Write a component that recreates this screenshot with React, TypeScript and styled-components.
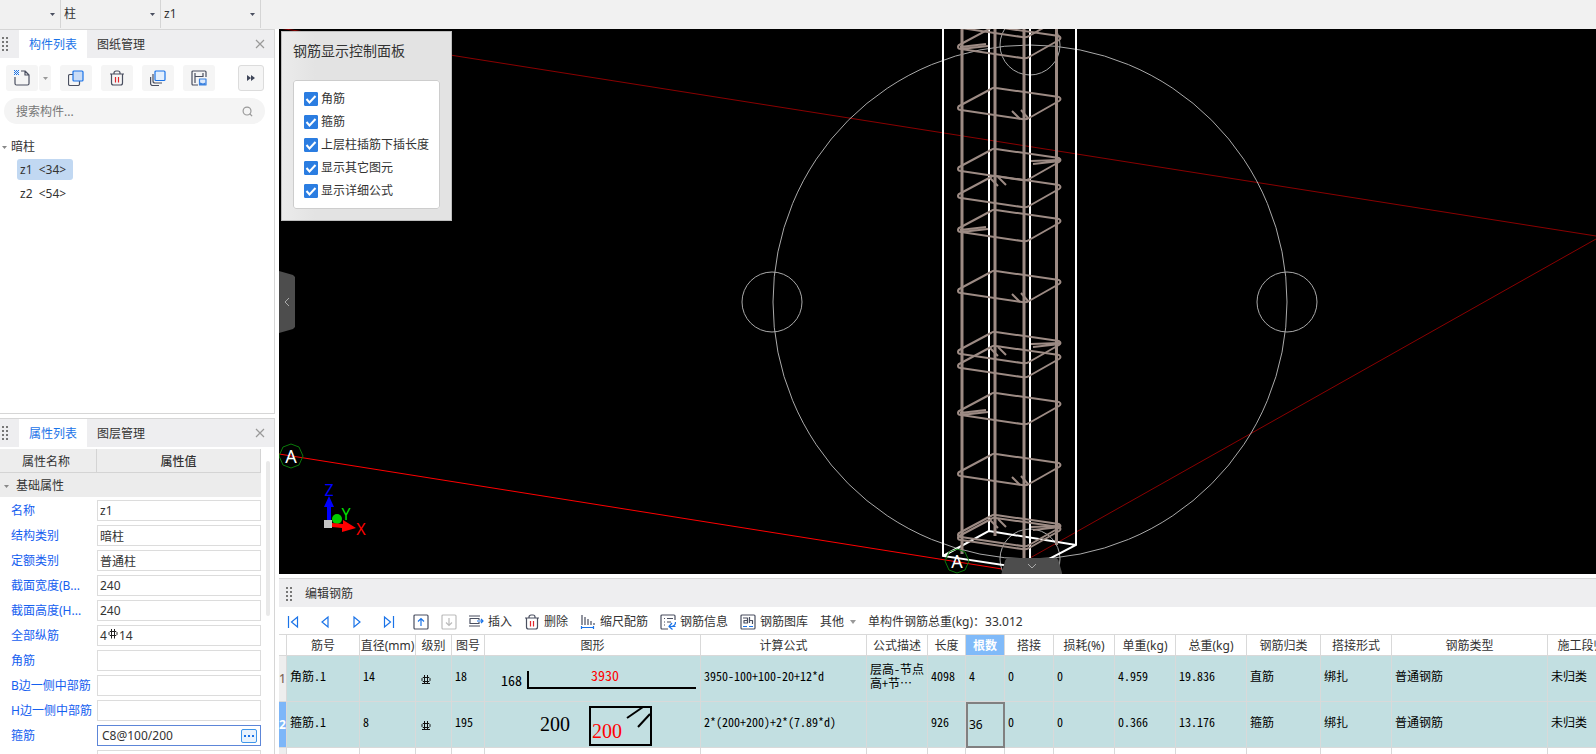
import React, { useState } from "react";
import styled, { createGlobalStyle, css } from "styled-components";

const uiFont = `"Noto Sans", "Noto Sans CJK SC", sans-serif`;
const gridFont = `"Noto Sans CJK SC", sans-serif`;

const GlobalStyle = createGlobalStyle`
  *, *::before, *::after { box-sizing: border-box; }
  body { margin: 0; background: #fff; color: #333; font: 12px/16px ${uiFont}; overflow: hidden; }
  button, input, select { font: inherit; color: inherit; }
  button { border: 0; padding: 0; background: none; cursor: pointer; }
`;

const Page = styled.div`
  display: flex;
  flex-direction: column;
  height: 100vh;
`;

const TopBar = styled.header`
  display: flex;
  flex: none;
  height: 29px;
  background: #f1f1f1;
`;

const Picker = styled.label<{ $w: number }>`
  display: grid;
  align-items: center;
  width: ${(p) => p.$w}px;
  height: 28px;
  border-right: 1px solid #d5d5d5;
  > * { grid-area: 1 / 1; }
  > svg { justify-self: end; margin-right: 5px; pointer-events: none; }
`;

const PickerSelect = styled.select`
  appearance: none;
  width: 100%;
  height: 28px;
  padding: 0 18px 0 3px;
  border: 0;
  background: none;
`;

const Main = styled.div`
  display: grid;
  grid-template-columns: 275px minmax(0, 1fr);
  gap: 4px;
  flex: 1;
  min-height: 0;
`;

const Column = styled.div`
  display: flex;
  flex-direction: column;
  gap: 4px;
  min-width: 0;
  min-height: 0;
`;

const Panel = styled.section<{ $basis?: number }>`
  display: flex;
  flex-direction: column;
  flex: ${(p) => (p.$basis ? `0 0 ${p.$basis}px` : "1 1 0")};
  min-height: 0;
  overflow: hidden;
  border: solid #d6d6d6;
  border-width: 1px 1px ${(p) => (p.$basis ? "1px" : "0")} 0;
`;

const TabBar = styled.div`
  display: flex;
  align-items: stretch;
  flex: none;
  height: 28px;
  background: #eeeef0;
`;

const Grip = styled.svg`
  flex: none;
  align-self: center;
  width: 19px;
  height: 16px;
  fill: #777;
`;

const Tab = styled.button<{ $active?: boolean }>`
  width: 68px;
  padding-top: 2px;
  background: ${(p) => (p.$active ? "#fff" : "transparent")};
  color: ${(p) => (p.$active ? "#1a73e8" : "#333")};
`;

const CloseButton = styled.button`
  display: flex;
  align-items: center;
  margin-left: auto;
  padding: 0 9px;
`;

const ToolRow = styled.div`
  display: flex;
  gap: 9px;
  padding: 7px 10px 7px 6px;
`;

const SplitButton = styled.div`
  display: flex;
  gap: 1px;
`;

const ToolButton = styled.button<{ $kind?: "arrow" | "more" }>`
  display: flex;
  align-items: center;
  justify-content: center;
  width: ${(p) => (p.$kind === "arrow" ? 12 : p.$kind === "more" ? 26 : 32)}px;
  height: 26px;
  border-radius: 3px;
  background: #f5f5f5;
  ${(p) => p.$kind === "more" && css`margin-left: auto; border: 1px solid #dcdcdc;`}
`;

const SearchBox = styled.label`
  display: flex;
  align-items: center;
  height: 26px;
  margin: 0 9px 0 4px;
  padding: 0 12px;
  border-radius: 13px;
  background: #f4f4f4;
`;

const SearchInput = styled.input`
  flex: 1;
  min-width: 0;
  padding: 2px 0 0;
  border: 0;
  outline: 0;
  background: none;
  &::placeholder { color: #777; opacity: 1; }
`;

const Tree = styled.ul`
  margin: 0;
  padding: 11px 0 0;
  list-style: none;
`;

const TreeGroup = styled.button`
  display: flex;
  align-items: center;
  gap: 4px;
  height: 24px;
  padding-left: 2px;
`;

const TreeItem = styled.button<{ $selected?: boolean }>`
  display: block;
  min-width: 56px;
  height: 21px;
  margin: 0 0 3px 17px;
  padding: 0 5px 0 3px;
  border-radius: 3px;
  background: ${(p) => (p.$selected ? "#c1d8f2" : "transparent")};
  text-align: left;
  white-space: pre;
`;

const PropertyArea = styled.div`
  display: grid;
  grid-template-columns: 261px 4px;
  gap: 5px;
  padding-top: 2px;
`;

const ScrollThumb = styled.div`
  height: 155px;
  margin-top: 12px;
  border-radius: 2px;
  background: #e9e9e9;
`;

const PropertyHead = styled.div`
  display: grid;
  grid-template-columns: 97px 1fr;
  height: 24px;
  line-height: 25px;
  border-bottom: 1px solid #d4d4d4;
  background: #ededed;
  text-align: center;
`;

const HeadCell = styled.div<{ $strong?: boolean }>`
  height: 23px;
  padding-right: ${(p) => (p.$strong ? 0 : 4)}px;
  border-right: 1px solid #d4d4d4;
  font-weight: ${(p) => (p.$strong ? 500 : 400)};
`;

const GroupRow = styled.button`
  display: flex;
  align-items: center;
  gap: 7px;
  width: 100%;
  height: 24px;
  margin-bottom: 1px;
  padding: 2px 0 0 4px;
  background: #ececec;
`;

const PropertyRow = styled.div`
  display: grid;
  grid-template-columns: 86px 164px;
  align-items: center;
  height: 25px;
  padding-left: 11px;
`;

const PropertyLabel = styled.label`
  color: #1560f0;
  white-space: nowrap;
`;

const Field = styled.div<{ $active?: boolean }>`
  display: flex;
  align-items: center;
  height: 21px;
  padding: 0 3px 0 ${(p) => (p.$active ? 4 : 2)}px;
  border: 1px solid ${(p) => (p.$active ? "#5d86d8" : "#dcdcdc")};
  background: #fff;
`;

const FieldInput = styled.input`
  flex: 1;
  min-width: 0;
  height: 19px;
  padding: 0;
  border: 0;
  outline: 0;
  background: none;
`;

const BarSpec = styled.output`
  display: flex;
  gap: 1px;
  > svg { margin-top: 1px; }
`;

const DotsButton = styled.button`
  display: flex;
  align-items: center;
  justify-content: center;
  width: 16px;
  height: 14px;
  border: 1px solid #3f96ea;
  border-radius: 2px;
  background: #e9f3fd;
`;

const Viewport = styled.main`
  position: relative;
  flex: 1;
  min-height: 0;
  background: #000;
  overflow: hidden;
`;

const Scene = styled.svg`
  display: block;
  width: 100%;
  height: 100%;
  font-family: ${uiFont};
`;

const ControlPanel = styled.section`
  position: absolute;
  left: 2px;
  top: 2px;
  width: 171px;
  padding: 10px 11px 11px;
  border: 1px solid #bdbdbd;
  background: linear-gradient(90deg, #ebebeb, #e3e3e3 20%);
`;

const ControlTitle = styled.h2`
  margin: 0 0 21px;
  font: 400 14px/17px ${uiFont};
`;

const CheckList = styled.fieldset`
  margin: 0;
  padding: 6px 10px;
  border: 1px solid #cdcdcd;
  border-radius: 3px;
  background: #fff;
`;

const CheckLabel = styled.label`
  display: flex;
  align-items: center;
  gap: 3px;
  height: 23px;
  white-space: nowrap;
`;

const CheckWrap = styled.span`
  display: grid;
  width: 14px;
  height: 14px;
  > * { grid-area: 1 / 1; }
  > svg { pointer-events: none; }
`;

const CheckBox = styled.input`
  appearance: none;
  width: 14px;
  height: 14px;
  margin: 0;
  border: 1px solid #2b7de1;
  border-radius: 1px;
  background: #fff;
  &:checked { background: #2b7de1; }
`;

const SideHandle = styled.button`
  position: absolute;
  left: 0;
  top: 242px;
  display: flex;
  align-items: center;
  justify-content: center;
  width: 16px;
  height: 62px;
  background: #4d4d4d;
  clip-path: polygon(0 0, 14px 4px, 16px 6px, 16px 56px, 14px 58px, 0 100%);
`;

const BottomHandle = styled.button`
  position: absolute;
  left: 55%;
  bottom: 0;
  display: flex;
  align-items: center;
  justify-content: center;
  width: 61px;
  height: 16px;
  margin-left: -2px;
  background: #4d4d4d;
  clip-path: polygon(4px 2px, 6px 0, 55px 0, 57px 2px, 100% 100%, 0 100%);
`;

const Editor = styled.section`
  flex: 0 0 176px;
  overflow: hidden;
  border-top: 1px solid #d6d6d6;
`;

const EditorTitle = styled.div`
  display: flex;
  align-items: center;
  gap: 2px;
  height: 28px;
  padding: 2px 0 0 5px;
  background: #eeeef0;
`;

const EditorTools = styled.div`
  display: flex;
  align-items: center;
  gap: 12px;
  height: 27px;
  padding-top: 2px;
  white-space: nowrap;
`;

const NavGroup = styled.div`
  display: flex;
  gap: 4px;
  margin-right: -7px;
`;

const NavButton = styled.button`
  display: flex;
  justify-content: center;
  align-items: center;
  width: 28px;
  height: 24px;
  & + &[data-joined] { margin-left: -4px; }
`;

const TextTool = styled.button`
  display: flex;
  align-items: center;
  gap: 4px;
`;

const Grid = styled.table`
  width: 1349px;
  min-width: 100%;
  table-layout: fixed;
  border-collapse: separate;
  border-spacing: 0;
  color: #000;
`;

const GridHead = styled.th<{ $active?: boolean }>`
  height: 22px;
  padding: 2px 0 0;
  border: solid #d9d9d9;
  border-width: 1px 1px 1px 0;
  font-weight: ${(p) => (p.$active ? 700 : 400)};
  color: ${(p) => (p.$active ? "#fff" : "#333")};
  background: ${(p) => (p.$active ? "#80baf9" : "#fff")};
  white-space: nowrap;
  overflow: hidden;
`;

const RowHead = styled.th<{ $active?: boolean }>`
  padding: 0;
  border: solid #d9d9d9;
  border-width: 0 1px 1px 0;
  color: ${(p) => (p.$active ? "#fff" : "#806a5c")};
  background: ${(p) => (p.$active ? "#7db6f8" : "#eee")};
  font-weight: ${(p) => (p.$active ? 700 : 500)};
`;

const GridCell = styled.td<{ $focus?: boolean; $blank?: boolean; $drawing?: boolean }>`
  height: ${(p) => (p.$blank ? 24 : 46)}px;
  padding: ${(p) => (p.$drawing ? "0" : "0 0 5px 3px")};
  border: solid #d9d9d9;
  border-width: 0 1px 1px 0;
  background: ${(p) => (p.$blank ? "#fff" : "#c2dfe1")};
  font: 12px/14px ${gridFont};
  font-feature-settings: "hwid";
  white-space: pre;
  overflow: hidden;
  ${(p) => p.$focus && css`
    padding: 0 0 0 3px;
    outline: 2px solid #808080;
    outline-offset: -2px;
    font-family: ${uiFont};
  `}
`;

const MarkCell = styled(GridCell)`
  padding: 0 0 0 5px;
  > svg { vertical-align: middle; }
`;

const Shape = styled.svg`
  display: block;
  width: 215px;
  height: 45px;
  font-family: ${gridFont};
  font-feature-settings: "hwid";
`;

const Caret = ({ color = "#4a4f60" }: { color?: string }) => (
  <svg width="5" height="3" viewBox="0 0 5 3"><path d="M0 0h5L2.500 3z" fill={color} /></svg>
);

const GripDots = () => (
  <Grip viewBox="0 0 19 16">
    {[1, 5, 9, 13].map((y) => <g key={y}><rect x="2" y={y} width="2" height="2" /><rect x="6" y={y} width="2" height="2" /></g>)}
  </Grip>
);

const Close = () => (
  <CloseButton aria-label="关闭">
    <svg width="10" height="10" viewBox="0 0 10 10" stroke="#999" strokeWidth="1.2"><path d="M1 1l8 8M9 1L1 9" /></svg>
  </CloseButton>
);

const RebarMark = () => (
  <svg width="10" height="10" viewBox="0 0 10 10" fill="none" stroke="#111">
    <path d="M3.500 0v9M6.500 0v9M2 2.500h6l1 1v2l-1 1H2l-1-1v-2zM1 8.500h8" />
  </svg>
);

const RebarSmall = () => (
  <svg width="10" height="10" viewBox="0 0 10 10" fill="none" stroke="#222">
    <path d="M3.500 0v9.500M6.500 0v9.500M2 2.500h6l1 1v2l-1 1H2l-1-1v-2z" />
  </svg>
);

const Icon = ({ children }: { children: React.ReactNode }) => (
  <svg width="16" height="16" viewBox="0 0 16 16" fill="none" stroke="#4a4f60" strokeWidth="1.2" strokeLinejoin="round">{children}</svg>
);

const TrashIcon = () => (
  <Icon>
    <path d="M1 4h14M5 4V3a2 2 0 0 1 2-2h2a2 2 0 0 1 2 2v1M2.500 4v9a2 2 0 0 0 2 2h7a2 2 0 0 0 2-2V4" />
    <path d="M6.500 7v5.500M9.500 7v5.500" stroke="#e0252b" />
  </Icon>
);

function ListTools() {
  return (
    <ToolRow>
      <SplitButton>
        <ToolButton aria-label="新建">
          <Icon>
            <path d="M7 1h4l4 4v8.500a1.500 1.500 0 0 1-1.500 1.500h-11A1.500 1.500 0 0 1 1 13.500V7M11 1v4h4" />
            <path d="M0 .500h5M0 2.500h5M0 4.500h5" stroke="#1a73e8" strokeDasharray="1 1" strokeWidth="1" />
            <path d="M1 1.500h4M1 3.500h4" stroke="#1a73e8" strokeDasharray="1 1" strokeWidth="1" />
          </Icon>
        </ToolButton>
        <ToolButton $kind="arrow" aria-label="新建选项"><Caret color="#999" /></ToolButton>
      </SplitButton>
      <ToolButton aria-label="复制">
        <Icon>
          <path d="M5 4.500H2a1.500 1.500 0 0 0-1.500 1.500v8A1.500 1.500 0 0 0 2 15.500h8a1.500 1.500 0 0 0 1.500-1.500v-3" />
          <rect x="5" y="1" width="10" height="10" rx="1" fill="#c9dcf6" stroke="#1a73e8" />
        </Icon>
      </ToolButton>
      <ToolButton aria-label="删除构件"><TrashIcon /></ToolButton>
      <ToolButton aria-label="层间复制">
        <Icon>
          <path d="M3 4v7a2 2 0 0 0 2 2h7M.600 7v6.500a2 2 0 0 0 2 2H9" />
          <rect x="5" y="1" width="10" height="9.500" rx="1" fill="#e3effd" stroke="#1a73e8" />
        </Icon>
      </ToolButton>
      <ToolButton aria-label="构件存档">
        <Icon>
          <path d="M7 15H2a1 1 0 0 1-1-1V2a1 1 0 0 1 1-1h12a1 1 0 0 1 1 1v5M4 3v10M4 6.500h8M12 3v4" />
          <rect x="8.500" y="9" width="6.500" height="6" fill="#dbe9fc" stroke="#3b82e0" /><path d="M9 12.500l3 1 2.500-1V15H9z" fill="#3b82e0" stroke="none" />
        </Icon>
      </ToolButton>
      <ToolButton $kind="more" aria-label="更多">
        <svg width="8" height="6" viewBox="0 0 8 6" fill="#3f4659"><path d="M0 0l4 3-4 3zM4 0l4 3-4 3z" /></svg>
      </ToolButton>
    </ToolRow>
  );
}

function ComponentPanel() {
  return (
    <Panel $basis={385}>
      <TabBar><GripDots /><Tab $active>构件列表</Tab><Tab>图纸管理</Tab><Close /></TabBar>
      <ListTools />
      <SearchBox>
        <SearchInput placeholder="搜索构件..." aria-label="搜索构件" />
        <svg width="11" height="11" viewBox="0 0 12 12" fill="none" stroke="#999" strokeWidth="1.300"><circle cx="5.500" cy="5.500" r="4.300" /><path d="M8.500 8.500l2.500 2.500" /></svg>
      </SearchBox>
      <Tree>
        <li>
          <TreeGroup><Caret color="#888" />暗柱</TreeGroup>
          <TreeItem $selected>{"z1  <34>"}</TreeItem>
          <TreeItem>{"z2  <54>"}</TreeItem>
        </li>
      </Tree>
    </Panel>
  );
}

const properties: [string, string][] = [
  ["名称", "z1"], ["结构类别", "暗柱"], ["定额类别", "普通柱"], ["截面宽度(B...", "240"], ["截面高度(H...", "240"],
  ["全部纵筋", "mark"], ["角筋", ""], ["B边一侧中部筋", ""], ["H边一侧中部筋", ""], ["箍筋", "C8@100/200"], ["", ""],
];

function PropertyPanel() {
  return (
    <Panel>
      <TabBar><GripDots /><Tab $active>属性列表</Tab><Tab>图层管理</Tab><Close /></TabBar>
      <PropertyArea>
        <div>
          <PropertyHead><HeadCell>属性名称</HeadCell><HeadCell $strong>属性值</HeadCell></PropertyHead>
          <GroupRow><Caret color="#888" />基础属性</GroupRow>
          {properties.map(([name, value], i) => (
            <PropertyRow key={i}>
              <PropertyLabel htmlFor={`prop-${i}`}>{name}</PropertyLabel>
              <Field $active={name === "箍筋"}>
                {value === "mark"
                  ? <BarSpec id={`prop-${i}`}>4<RebarSmall />14</BarSpec>
                  : <FieldInput id={`prop-${i}`} defaultValue={value} />}
                {name === "箍筋" && (
                  <DotsButton aria-label="编辑箍筋"><svg width="10" height="2" viewBox="0 0 10 2" fill="#1a73e8"><path d="M0 0h2v2H0zM4 0h2v2H4zM8 0h2v2H8z" /></svg></DotsButton>
                )}
              </Field>
            </PropertyRow>
          ))}
        </div>
        <ScrollThumb />
      </PropertyArea>
    </Panel>
  );
}

type Tie = "left" | "front" | "right" | "back";
const tiePaths: Record<Tie, string> = {
  left: "M960 0L986-3M961 2L988-1",
  front: "M1012 3l8 8M1021 2l7 8",
  right: "M1060-9L1031-8M1060-8L1033-5",
  back: "M990-18l8 8M998-19l8 8",
};
const hoops: [number, Tie][] = [
  [26, "right"], [47, "left"], [108, "front"], [169, "right"], [196, "back"], [230, "left"], [291, "front"],
  [352, "right"], [366, "back"], [413, "left"], [474, "front"], [535, "right"], [538, "back"],
];

const AxisBubble = ({ x, y }: { x: number; y: number }) => (
  <g transform={`translate(${x} ${y})`}>
    <path d="M0-12L8-9L12 0L8 9L0 12L-8 9L-12 0L-8-9Z" fill="none" stroke="#0a7a0a" />
    <text y="7" fill="#fff" fontSize="18" textAnchor="middle">A</text>
  </g>
);

function ModelScene() {
  return (
    <Scene viewBox="279 29 1317 545" preserveAspectRatio="xMidYMid slice" fill="none" role="img" aria-label="钢筋三维">
      <path d="M279 28L1596 236M1596 239L1030 558" stroke="#8a0000" />
      <path d="M279 454L1002 569" stroke="#f00" />
      <g stroke="#a9a9a9">
        <circle cx="1030" cy="302" r="257" />
        <circle cx="772" cy="302" r="30" /><circle cx="1287" cy="302" r="30" />
        <circle cx="1030" cy="45" r="30" /><circle cx="1030" cy="559" r="30" />
      </g>
      <path d="M943 29V556L1030 569L1076 545V29M943 556L989 531V29M989 531L1076 545" stroke="#fff" strokeWidth="2" />
      <g stroke="#9d8b84" strokeWidth="3">
        <path d="M962 29V554M995 29V536M1024 29V570M1056.500 29V545" />
      </g>
      <path d="M1030 29V571" stroke="#fff" strokeWidth="2" />
      <g stroke="#9d8b84" strokeWidth="2" strokeLinejoin="round">
        {hoops.map(([y, tie]) => (
          <g key={y} transform={`translate(0 ${y})`}>
            <path d="M958 0Q958-2 961-3L991-19Q993-21 996-20L1059-11Q1062-9 1059-7L1029 10Q1026 12 1022 11L961 2Q958 2 958 0Z" />
            <path d={tiePaths[tie]} />
          </g>
        ))}
      </g>
      <AxisBubble x={291} y={456} />
      <AxisBubble x={957} y={561} />
      <circle cx="337" cy="519" r="5" fill="#0c0" />
      <path d="M327 520V507h-3l5-11 5 11h-3v13z" fill="#00f" />
      <path d="M332 523l11 1v-4l13 8-14 4v-4l-10-1z" fill="#f00" />
      <rect x="324" y="520" width="8" height="8" fill="#c4c4c4" />
      <g fontSize="16" textAnchor="middle">
        <text x="329" y="496" fill="#00f">Z</text>
        <text x="346" y="520" fill="#0d0">Y</text>
        <text x="361" y="535" fill="#f00">X</text>
      </g>
    </Scene>
  );
}

function DisplayControl() {
  const [checks, setChecks] = useState([true, true, true, true, true]);
  const names = ["角筋", "箍筋", "上层柱插筋下插长度", "显示其它图元", "显示详细公式"];
  return (
    <ControlPanel>
      <ControlTitle>钢筋显示控制面板</ControlTitle>
      <CheckList>
        {names.map((name, i) => (
          <CheckLabel key={name}>
            <CheckWrap>
              <CheckBox type="checkbox" checked={checks[i]} onChange={() => setChecks(checks.map((c, j) => (j === i ? !c : c)))} />
              <svg width="14" height="14" viewBox="0 0 14 14" fill="none" stroke="#fff" strokeWidth="2"><path d="M2.500 7l3 3.500L11.500 4" /></svg>
            </CheckWrap>
            {name}
          </CheckLabel>
        ))}
      </CheckList>
    </ControlPanel>
  );
}

const NavIcon = ({ d, box, muted }: { d: string; box?: boolean; muted?: boolean }) => (
  <svg width="16" height="16" viewBox="0 0 16 16" fill="none" stroke={muted ? "#bbb" : "#1a73e8"} strokeWidth="1.200">
    {box && <rect x="1" y="1" width="14" height="14" rx="1" stroke={muted ? "#bbb" : "#4a4f60"} />}
    <path d={d} />
  </svg>
);

function EditorToolbar() {
  return (
    <EditorTools>
      <NavGroup>
        <NavButton aria-label="首条"><NavIcon d="M3.500 2v12M12.500 3v10L6.500 8z" /></NavButton>
        <NavButton aria-label="上一条"><NavIcon d="M11 3v10L5 8z" /></NavButton>
        <NavButton aria-label="下一条"><NavIcon d="M5 3v10l6-5z" /></NavButton>
        <NavButton aria-label="末条"><NavIcon d="M12.500 2v12M3.500 3v10L9.500 8z" /></NavButton>
        <NavButton aria-label="上移"><NavIcon box d="M8 12V4.500M5 7.500l3-3 3 3" /></NavButton>
        <NavButton aria-label="下移" data-joined=""><NavIcon box muted d="M8 4v7.500M5 8.500l3 3 3-3" /></NavButton>
      </NavGroup>
      <TextTool>
        <Icon><path d="M1 2h11M1 12h11M11 6V4.500H2v5h9V8" /><path d="M9 7h6M13 5l2 2-2 2" stroke="#1a73e8" /></Icon>插入
      </TextTool>
      <TextTool><TrashIcon />删除</TextTool>
      <TextTool>
        <Icon><path d="M2 1v10M5 3v8M8 5v6M11 7v4M14 9v2" /><path d="M1.500 12v3M13.500 12v3M1.500 13.500h12" stroke="#1a73e8" /></Icon>缩尺配筋
      </TextTool>
      <TextTool>
        <Icon><path d="M8 15H2a1 1 0 0 1-1-1V2a1 1 0 0 1 1-1h12a1 1 0 0 1 1 1v4M4 4.500h1M7 4.500h6M4 8h1M7 8h4M4 11h1" /><path d="M15.500 8c0 3-1 4-4 4.500M12 9l-3 3.500 3.500 3M15.500 12.500H9" stroke="#1a73e8" /></Icon>钢筋信息
      </TextTool>
      <TextTool>
        <Icon><rect x="1" y="1" width="14" height="14" rx="1" /><path d="M3 4h4.500v5H4V6.500h3.500M9.500 3v6M9.500 6.500h3V10" /><path d="M3 12.500h4M9 12.500h4" stroke="#1a73e8" /></Icon>钢筋图库
      </TextTool>
      <TextTool>其他<svg width="8" height="4" viewBox="0 0 8 4"><path d="M2 0h6L5 4z" fill="#999" /></svg></TextTool>
      <span>单构件钢筋总重(kg)：33.012</span>
    </EditorTools>
  );
}

const columns: [string, number][] = [
  ["", 8], ["筋号", 73], ["直径(mm)", 56], ["级别", 36], ["图号", 33], ["图形", 216], ["计算公式", 166], ["公式描述", 61],
  ["长度", 38], ["根数", 39], ["搭接", 49], ["损耗(%)", 61], ["单重(kg)", 61], ["总重(kg)", 71], ["钢筋归类", 74],
  ["搭接形式", 71], ["钢筋类型", 156], ["施工段归类", 80],
];

const BarShape = () => (
  <Shape viewBox="0 0 215 45">
    <text x="16" y="30" fontSize="14">168</text>
    <text x="106" y="25" fontSize="14" fill="#f00">3930</text>
    <path d="M43 15v17h168" fill="none" stroke="#000" strokeWidth="2" />
  </Shape>
);

const HoopShape = () => (
  <Shape viewBox="0 0 215 45">
    <text x="55" y="29" fontSize="20" fontFamily="Liberation Serif">200</text>
    <text x="107" y="36" fontSize="20" fontFamily="Liberation Serif" fill="#f00">200</text>
    <path d="M105 5h61v38h-61zM142 16l16-11M153 25l12-13" fill="none" stroke="#000" strokeWidth="2" />
  </Shape>
);

const rows: React.ReactNode[][] = [
  ["角筋.1", "14", <RebarMark />, "18", <BarShape />, "3950-100+100-20+12*d", "层高-节点\n高+节…", "4098", "4", "0", "0", "4.959", "19.836", "直筋", "绑扎", "普通钢筋", "未归类"],
  ["箍筋.1", "8", <RebarMark />, "195", <HoopShape />, "2*(200+200)+2*(7.89*d)", "", "926", "36", "0", "0", "0.366", "13.176", "箍筋", "绑扎", "普通钢筋", "未归类"],
];

function RebarGrid() {
  return (
    <Grid>
      <colgroup>{columns.map(([name, w]) => <col key={name} width={w} />)}</colgroup>
      <thead><tr>{columns.map(([name]) => <GridHead key={name} $active={name === "根数"}>{name}</GridHead>)}</tr></thead>
      <tbody>
        {rows.map((cells, r) => (
          <tr key={r}>
            <RowHead $active={r === 1}>{r + 1}</RowHead>
            {cells.map((cell, c) => c === 2
              ? <MarkCell key={c}>{cell}</MarkCell>
              : <GridCell key={c} $drawing={c === 4} $focus={r === 1 && c === 8}>{cell}</GridCell>)}
          </tr>
        ))}
        <tr><RowHead />{rows[0].map((_, c) => <GridCell key={c} $blank />)}</tr>
      </tbody>
    </Grid>
  );
}

export default function App() {
  return (
    <Page>
      <GlobalStyle />
      <TopBar>
        {[["", 61], ["柱", 100], ["z1", 100]].map(([value, w]) => (
          <Picker key={value} $w={w as number}>
            <PickerSelect aria-label={`选择${value}`}><option>{value}</option></PickerSelect>
            <Caret />
          </Picker>
        ))}
      </TopBar>
      <Main>
        <Column><ComponentPanel /><PropertyPanel /></Column>
        <Column>
          <Viewport>
            <ModelScene />
            <DisplayControl />
            <SideHandle aria-label="收起左侧"><svg width="6" height="10" viewBox="0 0 6 10" fill="none" stroke="#aaa"><path d="M5 1L1 5l4 4" /></svg></SideHandle>
            <BottomHandle aria-label="收起底部"><svg width="10" height="6" viewBox="0 0 10 6" fill="none" stroke="#aaa"><path d="M1 1l4 4 4-4" /></svg></BottomHandle>
          </Viewport>
          <Editor>
            <EditorTitle><GripDots />编辑钢筋</EditorTitle>
            <EditorToolbar />
            <RebarGrid />
          </Editor>
        </Column>
      </Main>
    </Page>
  );
}
